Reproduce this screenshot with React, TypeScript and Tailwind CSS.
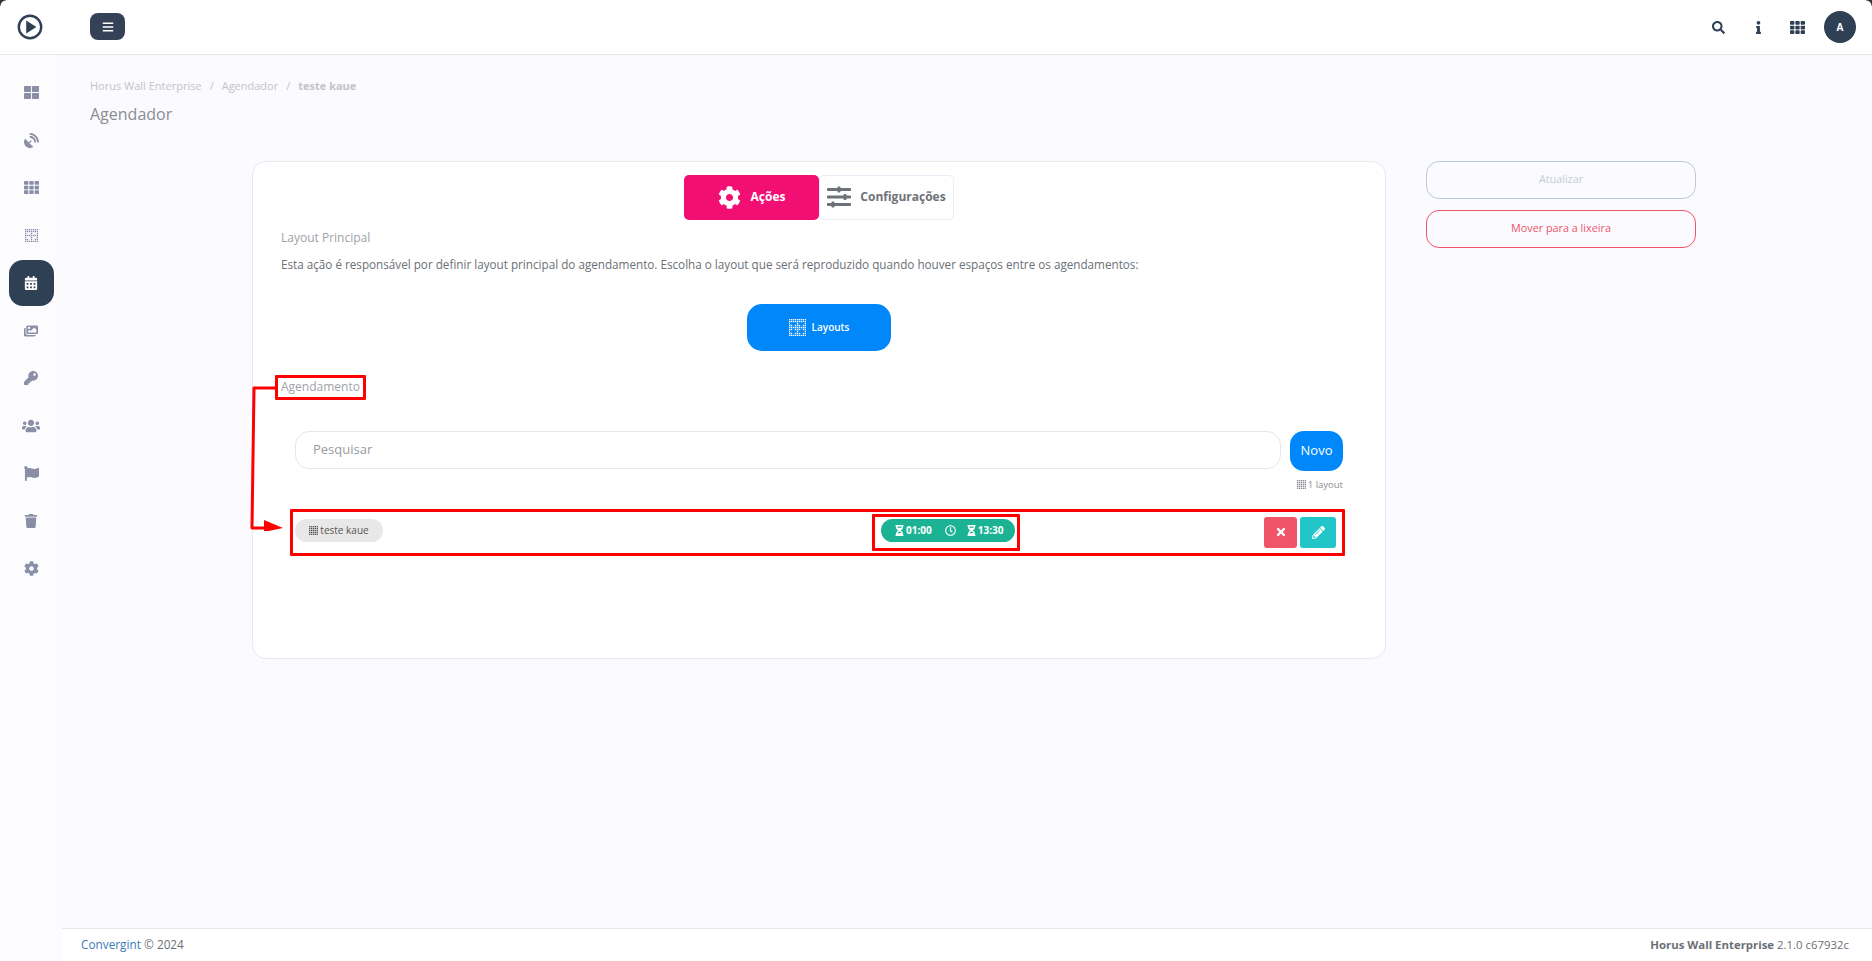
import {
  FaBars, FaCalendarAlt, FaCog, FaFlag, FaHourglassHalf, FaImages, FaInfo, FaKey, FaPencilAlt,
  FaRegClock, FaSatelliteDish, FaSearch, FaSlidersH, FaTh, FaThLarge, FaTimes, FaTrash, FaUsers,
} from 'react-icons/fa';

// grade pontilhada usada no icone de layouts: um ponto a cada 2px
function DottedGrid({ dots = 9 }: { dots?: number }) {
  const size = dots * 2 - 1;
  const mid = (dots - 1) / 2;
  const cells = [];
  for (let y = 0; y < dots; y++) {
    for (let x = 0; x < dots; x++) {
      const onLine = x === 0 || y === 0 || x === dots - 1 || y === dots - 1 || x === mid || y === mid || y === 1 || (x % 2 === 1 && y % 2 === 1);
      if (onLine) cells.push(<rect key={`${x}-${y}`} x={x * 2 - 0.2} y={y * 2 - 0.2} width="1.4" height="1.4" />);
    }
  }
  return (
    <svg width={size} height={size} viewBox={`0 0 ${size} ${size}`} fill="currentColor">
      {cells}
    </svg>
  );
}

function Logo() {
  return (
    <svg width="26" height="26" viewBox="0 0 26 26">
      <circle cx="13" cy="13" r="11.2" fill="none" stroke="#2f4054" strokeWidth="2.4" />
      <path d="M9.2 6.6 L19.4 13 L9.2 19.4 Z" fill="#2f4054" />
    </svg>
  );
}

const sideItems = [
  { icon: <FaThLarge size={15} /> },
  { icon: <FaSatelliteDish size={15} /> },
  { icon: <FaTh size={15} /> },
  { icon: <DottedGrid dots={7} /> },
  { icon: <FaCalendarAlt size={14} color="#fff" />, active: true },
  { icon: <FaImages size={14} /> },
  { icon: <FaKey size={14} /> },
  { icon: <FaUsers size={18} /> },
  { icon: <FaFlag size={15} /> },
  { icon: <FaTrash size={14} /> },
  { icon: <FaCog size={15} /> },
];

export default function App() {
  return (
    <div className="relative flex h-[961px] w-[1872px] flex-col overflow-hidden bg-[#fafaff] font-['Open_Sans',sans-serif] text-[#6b6f76]">
      {/* Topo */}
      <header className="flex h-[55px] shrink-0 items-center border-b border-[#e7e7ee] bg-white">
        <div className="flex w-[90px] shrink-0 justify-center pr-[30px]"><Logo /></div>
        <button className="-mt-[1px] flex h-[27px] w-[35px] items-center justify-center rounded-[8px] bg-[#344157] text-white">
          <FaBars size={12} />
        </button>
        <div className="ml-auto flex items-center pr-[16px] text-[#2f4054]">
          <FaSearch size={13} className="mr-[27px]" />
          <FaInfo size={13} className="mr-[25px]" />
          <FaTh size={15} className="mr-[19px]" />
          <div className="flex h-[32px] w-[32px] items-center justify-center rounded-full bg-[#2f4054] text-[10px] font-bold text-white">A</div>
        </div>
      </header>

      <div className="flex min-h-0 flex-1">
        {/* Menu lateral */}
        <aside className="flex w-[62px] shrink-0 flex-col items-center bg-[#fcfcff] pt-[14px] text-[#8a8ea6]">
          {sideItems.map((item, i) => (
            <div key={i} className="flex h-[47.6px] w-[45px] items-center justify-center">
              {item.active ? (
                <div className="flex h-[46px] w-[45px] items-center justify-center rounded-[14px] bg-[#2f4054]">{item.icon}</div>
              ) : (
                item.icon
              )}
            </div>
          ))}
        </aside>

        <div className="flex min-w-0 flex-1 flex-col">
          <main className="flex-1 px-[28px] pt-[23px]">
            <div className="flex h-[16px] items-center text-[11px] text-[#c3c4c8]">
              <span>Horus Wall Enterprise</span>
              <span className="mx-[8px]">/</span>
              <span>Agendador</span>
              <span className="mx-[8px]">/</span>
              <span className="font-bold">teste kaue</span>
            </div>
            <h1 className="mt-[8px] text-[16px] leading-[24px] font-normal text-[#8b8d92]">Agendador</h1>

            <div className="mt-[34.5px] ml-[162px] flex items-start gap-[40px]">
              {/* Cartao principal */}
              <section className="h-[498px] w-[1134px] rounded-[14px] border border-[#e8e8ee] bg-white">
                <div className="mt-[13px] flex justify-center">
                  <div className="flex h-[45px] w-[270px]">
                    <div className="flex w-[135px] items-center justify-center gap-[10px] rounded-[5px] bg-[#f20f73] text-[12px] font-bold text-white">
                      <FaCog size={23} />
                      Ações
                    </div>
                    <div className="flex w-[135px] items-center justify-center gap-[9px] rounded-[5px] border border-[#e6eef8] bg-white text-[12px] font-bold text-[#6e7278]">
                      <FaSlidersH size={24} />
                      Configurações
                    </div>
                  </div>
                </div>

                <div className="mt-[9.5px] px-[28px]">
                  <h3 className="text-[12px] leading-[18px] font-normal text-[#a0a2a8]">Layout Principal</h3>
                  <p className="mt-[8px] text-[11.7px] leading-[18px] text-[#6b6f76]">
                    Esta ação é responsável por definir layout principal do agendamento. Escolha o layout que será reproduzido quando houver espaços entre os agendamentos:
                  </p>
                </div>

                <div className="mt-[31px] flex justify-center">
                  <button className="flex h-[47px] w-[144px] items-center justify-center gap-[6px] rounded-[15px] bg-[#0088fb] text-[10px] font-semibold text-white">
                    <DottedGrid dots={9} />
                    Layouts
                  </button>
                </div>

                <h3 className="mt-[27px] px-[28px] text-[12px] leading-[18px] font-normal text-[#a0a2a8]">Agendamento</h3>

                <div className="mt-[34.5px] px-[42px]">
                  <div className="flex gap-[9px]">
                    <div className="flex h-[38px] flex-1 items-center rounded-[14px] border border-[#e8e8ec] bg-white pt-[1px] pl-[17px] text-[13px] text-[#9a9ca2]">
                      Pesquisar
                    </div>
                    <button className="h-[40px] w-[53px] rounded-[14px] bg-[#0088fb] text-[13px] text-white">Novo</button>
                  </div>
                  <div className="mt-[7px] flex items-center justify-end gap-[2px] text-[9.5px] leading-[14px] text-[#8b8d92]">
                    <DottedGrid dots={5} />
                    1 layout
                  </div>

                  <div className="mt-[25px] flex items-start">
                    <div className="mt-[2px] flex h-[23px] w-[88px] items-center justify-center gap-[2px] rounded-full bg-[#e8e8e8] text-[10px] text-[#555]">
                      <DottedGrid dots={5} />
                      teste kaue
                    </div>
                    <div className="mt-[2px] ml-[498px] flex h-[23px] w-[134px] items-center rounded-full bg-[#1cb394] pl-[13px] text-[10px] font-bold text-white">
                      <FaHourglassHalf size={11} />
                      <span className="ml-[1px]">01:00</span>
                      <FaRegClock size={11} className="ml-[13px]" />
                      <FaHourglassHalf size={11} className="ml-[10px]" />
                      <span className="ml-[1px]">13:30</span>
                    </div>
                    <div className="ml-auto flex gap-[3px] pr-[7px]">
                      <button className="flex h-[31px] w-[33px] items-center justify-center rounded-[3px] bg-[#ef5469] text-white"><FaTimes size={12} /></button>
                      <button className="flex h-[31px] w-[36px] items-center justify-center rounded-[3px] bg-[#23c6c8] text-white"><FaPencilAlt size={13} /></button>
                    </div>
                  </div>
                </div>
              </section>

              {/* Acoes laterais */}
              <div className="flex w-[270px] flex-col gap-[11px]">
                <button className="h-[38px] rounded-[13px] border border-[#bccbd8] text-[10.8px] text-[#c3ced9]">Atualizar</button>
                <button className="h-[38px] rounded-[13px] border border-[#ef5469] text-[10.8px] text-[#ef5469]">Mover para a lixeira</button>
              </div>
            </div>
          </main>

          <footer className="flex h-[33px] shrink-0 items-center justify-between border-t border-[#e7e7ee] bg-white pr-[23px] pl-[19px]">
            <span className="text-[11.8px]"><span className="text-[#3d7ab8]">Convergint</span> © 2024</span>
            <span className="text-[11.4px]"><span className="font-bold">Horus Wall Enterprise</span> 2.1.0 c67932c</span>
          </footer>
        </div>
      </div>

      {/* Marcacoes em vermelho sobre a captura */}
      <div className="pointer-events-none absolute top-[375px] left-[275px] h-[25px] w-[91px] rounded-[1px] border-[3px] border-[#fe0000]" />
      <div className="pointer-events-none absolute top-[509px] left-[290px] h-[47px] w-[1055px] rounded-[1px] border-[3px] border-[#fe0000]" />
      <div className="pointer-events-none absolute top-[514px] left-[872px] h-[37px] w-[148px] rounded-[1px] border-[3px] border-[#fe0000]" />
      <svg className="pointer-events-none absolute top-[385px] left-[248px]" width="44" height="146" viewBox="0 0 44 146">
        <path d="M27 3 H6 L4 143 H18" fill="none" stroke="#fe0000" strokeWidth="3" strokeLinejoin="round" />
        <path d="M16 135 L35 143 L16 147 Z" fill="#fe0000" />
      </svg>

      {/* Cantos escuros da janela */}
      <div className="absolute top-0 left-0 h-[6px] w-[6px] bg-[radial-gradient(circle_at_100%_100%,transparent_5px,#333_6px)]" />
      <div className="absolute top-0 right-0 h-[6px] w-[6px] bg-[radial-gradient(circle_at_0%_100%,transparent_5px,#333_6px)]" />
    </div>
  );
}
